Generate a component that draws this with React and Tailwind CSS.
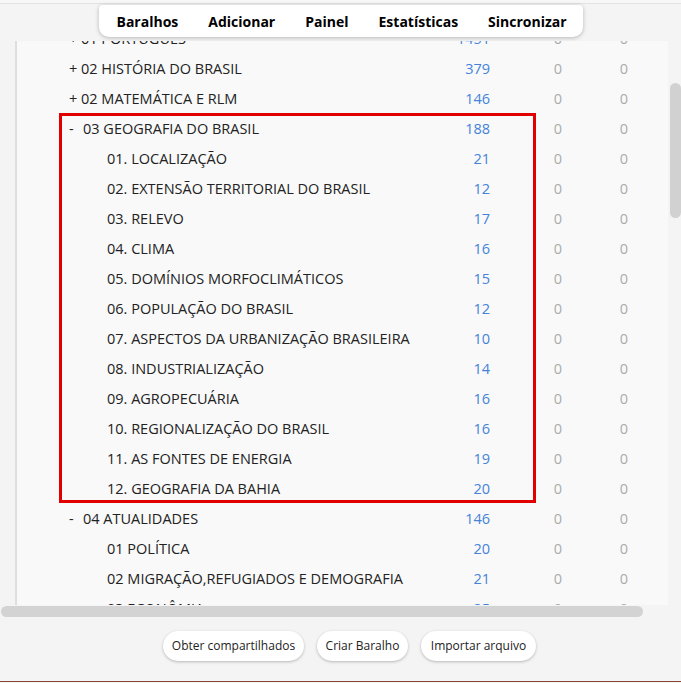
import React from "react";

const rows = [
  { t: "01 PORTUGUÊS", n: "1451", lvl: 0, s: "+" },
  { t: "02 HISTÓRIA DO BRASIL", n: "379", lvl: 0, s: "+" },
  { t: "02 MATEMÁTICA E RLM", n: "146", lvl: 0, s: "+" },
];
const geo = [
  { t: "03 GEOGRAFIA DO BRASIL", n: "188", lvl: 0, s: "-" },
  { t: "01. LOCALIZAÇÃO", n: "21", lvl: 1 },
  { t: "02. EXTENSÃO TERRITORIAL DO BRASIL", n: "12", lvl: 1 },
  { t: "03. RELEVO", n: "17", lvl: 1 },
  { t: "04. CLIMA", n: "16", lvl: 1 },
  { t: "05. DOMÍNIOS MORFOCLIMÁTICOS", n: "15", lvl: 1 },
  { t: "06. POPULAÇÃO DO BRASIL", n: "12", lvl: 1 },
  { t: "07. ASPECTOS DA URBANIZAÇÃO BRASILEIRA", n: "10", lvl: 1 },
  { t: "08. INDUSTRIALIZAÇÃO", n: "14", lvl: 1 },
  { t: "09. AGROPECUÁRIA", n: "16", lvl: 1 },
  { t: "10. REGIONALIZAÇÃO DO BRASIL", n: "16", lvl: 1 },
  { t: "11. AS FONTES DE ENERGIA", n: "19", lvl: 1 },
  { t: "12. GEOGRAFIA DA BAHIA", n: "20", lvl: 1 },
];
const rest = [
  { t: "04 ATUALIDADES", n: "146", lvl: 0, s: "-" },
  { t: "01 POLÍTICA", n: "20", lvl: 1 },
  { t: "02 MIGRAÇÃO,REFUGIADOS E DEMOGRAFIA", n: "21", lvl: 1 },
  { t: "03 ECONÔMIA", n: "25", lvl: 1 },
];

function Row({ r }) {
  return (
    <div className="flex h-[30px] items-center whitespace-nowrap">
      <div className="flex w-[440px] items-center">
        {r.lvl === 0 ? (
          <>
            <span className="w-[54px]" />
            <span className={r.s === "+" ? "w-[12px]" : "w-[14px]"}>{r.s}</span>
            <span>{r.t}</span>
          </>
        ) : (
          <>
            <span className="w-[92px]" />
            <span>{r.t}</span>
          </>
        )}
      </div>
      <div className="w-[35px] text-right text-[#4583d9]">{r.n}</div>
      <div className="w-[38px]" />
      <div className="w-[60px] text-center text-[#ababab]">0</div>
      <div className="w-[6px]" />
      <div className="w-[60px] text-center text-[#ababab]">0</div>
    </div>
  );
}

export default function App() {
  return (
    <div
      className="relative h-[683px] w-[681px] overflow-hidden bg-[#f4f4f4] text-[#222]"
      style={{ fontFamily: '"Open Sans", "Noto Sans", sans-serif' }}
    >
      <div className="h-[4px] border-b border-[#e2e2e2] bg-[#f7f7f7]" />
      <div className="flex justify-center">
        <div className="mt-[1px] flex h-[32px] w-[484px] items-center gap-[30px] rounded-b-[10px] rounded-t-[4px] bg-white pl-[18px] text-[14px] font-bold text-black shadow-[0_1px_4px_rgba(0,0,0,0.25)]">
          <span>Baralhos</span>
          <span>Adicionar</span>
          <span>Painel</span>
          <span>Estatísticas</span>
          <span>Sincronizar</span>
        </div>
      </div>
      <div className="mt-[4px] flex h-[564px]">
        <div className="h-full w-[669px] overflow-hidden">
          <div className="ml-[15px] h-full w-[653px] overflow-hidden border-l-2 border-[#dedede] bg-[#f9f9f9] text-[14.5px]">
            <div className="-ml-[2px] -mt-[17px]">
              {rows.map((r, i) => (
                <Row key={i} r={r} />
              ))}
              <div className="relative">
                {geo.map((r, i) => (
                  <Row key={i} r={r} />
                ))}
                <div className="absolute left-[44px] top-[-1px] h-[390px] w-[477px] border-[3px] border-[#e10000]" />
              </div>
              {rest.map((r, i) => (
                <Row key={i} r={r} />
              ))}
            </div>
          </div>
        </div>
        <div className="relative w-[12px]">
          <div className="absolute left-[1px] top-[42px] h-[135px] w-[11px] rounded-full bg-[#d1d1d1]" />
        </div>
      </div>
      <div className="ml-[1px] mt-[1px] h-[11px] w-[642px] rounded-full bg-[#d3d3d3]" />
      <div className="mt-[14px] flex justify-center gap-[13px] pl-[18px] text-[12px] font-medium text-[#222]">
        <button className="h-[30px] w-[141px] rounded-full bg-white shadow-[0_1px_3px_rgba(0,0,0,0.25)]">
          Obter compartilhados
        </button>
        <button className="h-[30px] w-[91px] rounded-full bg-white shadow-[0_1px_3px_rgba(0,0,0,0.25)]">
          Criar Baralho
        </button>
        <button className="h-[30px] w-[115px] rounded-full bg-white shadow-[0_1px_3px_rgba(0,0,0,0.25)]">
          Importar arquivo
        </button>
      </div>
      <div className="absolute bottom-0 left-0 h-[2px] w-full border-t border-[#8a4536] bg-[#f4f4f4]" />
    </div>
  );
}
